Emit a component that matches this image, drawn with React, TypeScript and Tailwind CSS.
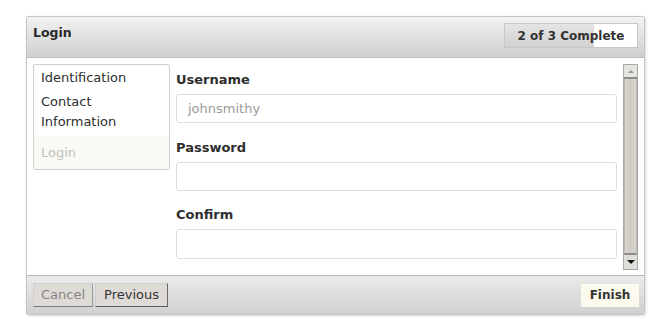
import React from "react";

const font = { fontFamily: '"DejaVu Sans", Verdana, sans-serif' };

export default function App() {
  return (
    <div className="w-[658px] h-[332px] bg-white pt-[16px] pl-[26px]" style={font}>
      <div className="w-[619px] h-[299px] border border-[#c4c4c4] rounded-[2px] shadow-[1px_1px_3px_rgba(0,0,0,0.15)] flex flex-col overflow-hidden">
        {/* Header */}
        <div className="h-[41px] shrink-0 bg-gradient-to-b from-[#f2f2f2] to-[#d0d0d0] border-b border-[#bdbdbd] flex items-start justify-between pl-[6px] pr-[6px] pt-[6px]">
          <div className="mt-[2px] text-[12.5px] leading-[16px] font-bold text-[#2a2a2a]">Login</div>
          <div className="relative w-[134px] h-[25px] border border-[#c8c8c8] bg-gradient-to-b from-[#e4e4e4] to-[#d2d2d2] flex items-center justify-center">
            <div className="absolute right-0 top-0 bottom-0 w-[43px] bg-white" />
            <span className="relative text-[12px] font-bold text-[#333]">2 of 3 Complete</span>
          </div>
        </div>
        {/* Body */}
        <div className="flex-1 flex bg-white pt-[6px] pl-[6px] pr-[6px]">
          <div className="w-[137px] h-[106px] shrink-0 border border-[#cfcfcf] rounded-[2px] text-[13px] leading-[20px] text-[#2e2e2e] flex flex-col">
            <div className="px-[7px] pt-[3px] pb-[3px]">Identification</div>
            <div className="px-[7px] pt-[1px] pb-[4px]">Contact<br />Information</div>
            <div className="flex-1 px-[7px] pt-[7px] bg-[#faf9f4] text-[#c2c2c2]">Login</div>
          </div>
          <div className="ml-[6px] w-[441px] flex flex-col">
            <div className="text-[13px] font-bold text-[#2e2e2e] leading-[16px] mt-[8px]">Username</div>
            <div className="mt-[6px] h-[29px] border border-[#dcdcdc] rounded-[3px] flex items-center pl-[11px] text-[13px] text-[#9a9a9a]">johnsmithy</div>
            <div className="text-[13px] font-bold text-[#2e2e2e] leading-[16px] mt-[17px]">Password</div>
            <div className="mt-[6px] h-[29px] border border-[#dcdcdc] rounded-[3px]" />
            <div className="text-[13px] font-bold text-[#2e2e2e] leading-[16px] mt-[16px]">Confirm</div>
            <div className="mt-[6px] h-[30px] border border-[#dcdcdc] rounded-[3px]" />
          </div>
          <div className="ml-[6px] w-[15px] h-[206px] flex flex-col border border-[#a8a8a8] bg-[#d6d3cc]">
            <div className="h-[14px] bg-[#e6e4df] border-b-[2px] border-[#8d8d8d] flex items-center justify-center">
              <div className="w-0 h-0 border-l-[3px] border-r-[3px] border-b-[3px] border-l-transparent border-r-transparent border-b-[#9a9a9a]" />
            </div>
            <div className="flex-1 border-l border-r border-[#bdbab3] bg-gradient-to-r from-[#d8d5ce] via-[#cfccc5] to-[#d8d5ce] border-b-[2px] border-b-[#8d8d8d]" />
            <div className="h-[14px] bg-[#e0ded9] flex items-center justify-center">
              <div className="w-0 h-0 border-l-[4px] border-r-[4px] border-t-[4px] border-l-transparent border-r-transparent border-t-[#111]" />
            </div>
          </div>
        </div>
        {/* Footer */}
        <div className="h-[39px] shrink-0 border-t border-[#b8b8b8] bg-gradient-to-b from-[#ebebeb] to-[#d0d0d0] flex items-center justify-between pl-[6px] pr-[5px]">
          <div className="flex gap-[2px]">
            <div className="h-[24px] w-[60px] bg-[#dedbd6] border border-[#cfcfcf] border-b-[#7a7a7a] border-r-[#9a9a9a] flex items-center justify-center text-[13px] text-[#858585]">Cancel</div>
            <div className="h-[24px] w-[73px] bg-[#dedbd6] border border-[#cfcfcf] border-b-[#5a5a5a] border-r-[#6a6a6a] flex items-center justify-center text-[13px] text-[#333]">Previous</div>
          </div>
          <div className="h-[23px] w-[58px] bg-[#fbfaec] flex items-center justify-center text-[12px] font-bold text-[#333]">Finish</div>
        </div>
      </div>
    </div>
  );
}
